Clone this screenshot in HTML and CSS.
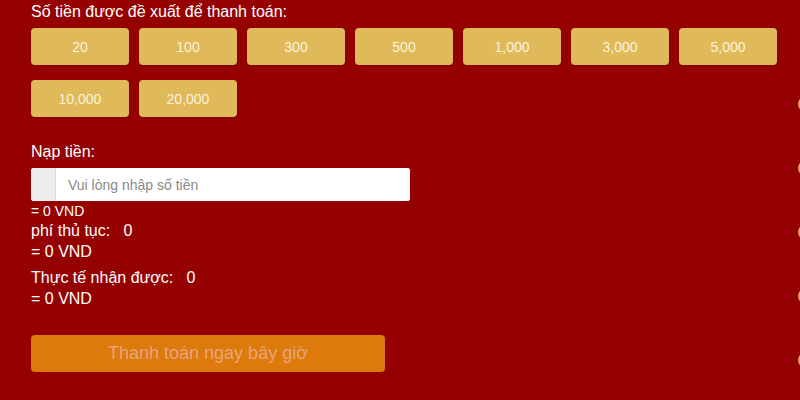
FILE: index.html
```html
<!DOCTYPE html>
<html lang="vi">
<head>
    <meta charset="UTF-8">
    <meta name="viewport" content="width=device-width, initial-scale=1">
    <title>Nạp tiền</title>
    <link rel="stylesheet" href="styles.css">
</head>
<body>

    <div class="page">
        <div class="container">
            <p class="title">Số tiền được đề xuất để thanh toán:</p>

            <div class="amounts">
                <button class="amount">20</button>
                <button class="amount">100</button>
                <button class="amount">300</button>
                <button class="amount">500</button>
                <button class="amount">1,000</button>
                <button class="amount">3,000</button>
                <button class="amount">5,000</button>
                <button class="amount">10,000</button>
                <button class="amount">20,000</button>
            </div>

            <p class="label">Nạp tiền:</p>
            <div class="input-group">
                <span class="addon"></span>
                <input type="text" placeholder="Vui lòng nhập số tiền">
            </div>
            <p class="small">= 0 VND</p>

            <p class="line">phí thủ tục:&nbsp;&nbsp; 0</p>
            <p class="line">= 0 VND</p>
            <p class="line gap">Thực tế nhận được:&nbsp;&nbsp; 0</p>
            <p class="line">= 0 VND</p>

            <button class="pay">Thanh toán ngay bây giờ</button>
        </div>

        <!-- edge of the next column -->
        <div class="dots">
            <span class="dot"></span>
            <span class="dot"></span>
            <span class="dot"></span>
            <span class="dot"></span>
            <span class="dot"></span>
        </div>
    </div>

</body>
</html>
```

FILE: styles.css
```css
* {
    margin: 0;
    padding: 0;
    box-sizing: border-box;
}
body {
    font-family: "Liberation Sans", Arial, sans-serif;
    background: #950101;
    color: #fff;
    overflow: hidden;
}
.page {
    position: relative;
    height: 400px;
}
.container {
    padding: 2px 0 0 31px;
}
.title {
    font-size: 16px;
    line-height: 20px;
}
.amounts {
    display: grid;
    grid-template-columns: repeat(7, 98px);
    column-gap: 10px;
    row-gap: 15px;
    margin-top: 6px;
}
.amount {
    height: 37px;
    background: #e0b95b;
    color: #fdf3d8;
    border: none;
    border-radius: 4px;
    font-family: inherit;
    font-size: 14px;
    box-shadow: 0 1px 2px rgba(0, 0, 0, 0.15);
}
.label {
    font-size: 16px;
    line-height: 20px;
    margin-top: 25px;
}
.input-group {
    display: flex;
    width: 379px;
    height: 33px;
    margin-top: 6px;
    background: #fff;
    border-radius: 3px;
    overflow: hidden;
}
.addon {
    width: 25px;
    background: #eeeeee;
    border-right: 1px solid #dcdcdc;
}
.input-group input {
    flex: 1;
    border: none;
    outline: none;
    padding-left: 12px;
    font-family: inherit;
    font-size: 14px;
}
.input-group input::placeholder {
    color: #8a8a8a;
}
.small {
    font-size: 14px;
    line-height: 18px;
    margin-top: 1px;
}
.line {
    font-size: 16px;
    line-height: 21px;
}
.gap {
    margin-top: 5px;
}
.pay {
    display: block;
    width: 354px;
    height: 37px;
    margin-top: 26px;
    background: #dc7a0b;
    color: #eba37b;
    border: none;
    border-radius: 4px;
    font-family: inherit;
    font-size: 18px;
}
.dots {
    position: absolute;
    top: 96px;
    right: -14px;
    display: flex;
    flex-direction: column;
    gap: 48px;
}
.dot {
    width: 16px;
    height: 16px;
    border-radius: 50%;
    background: #f0a850;
}
```
